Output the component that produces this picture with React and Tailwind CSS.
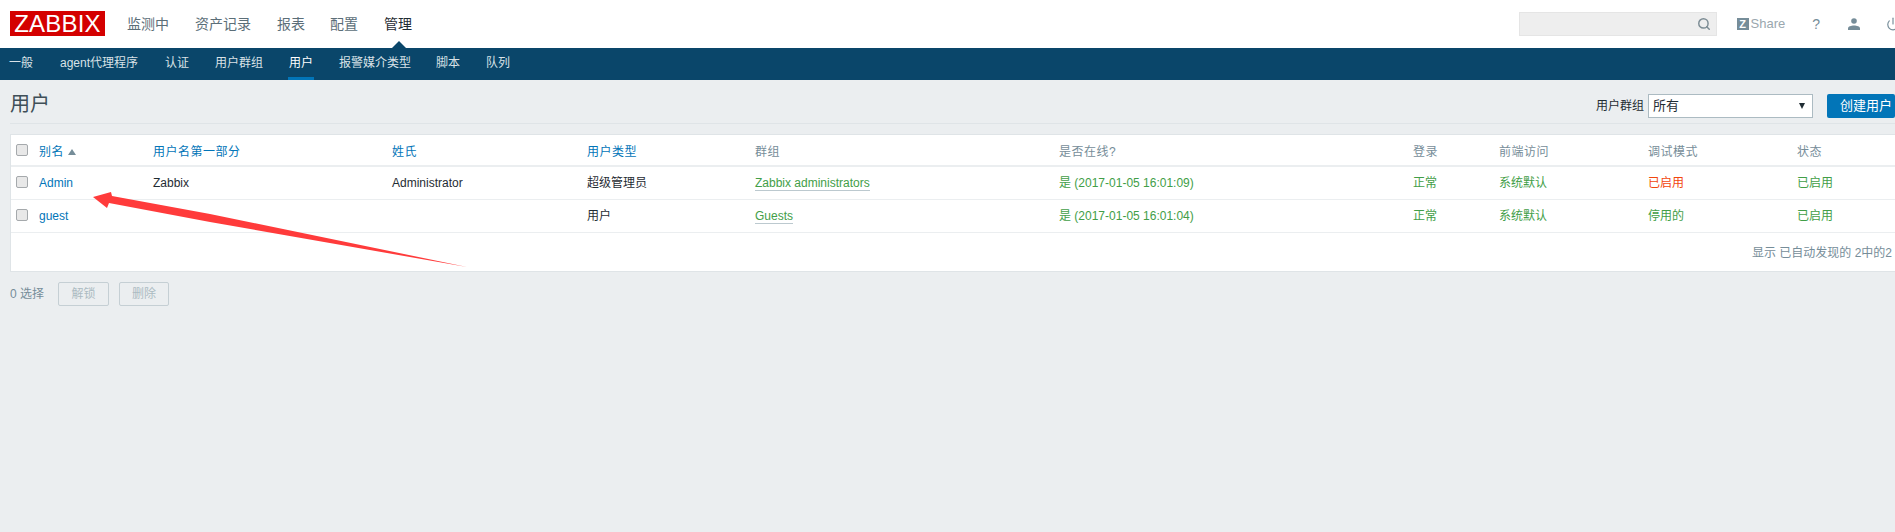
import React from 'react';
import { Search, Power } from 'lucide-react';

const menu = [
  { label: '监测中', cls: 'ml-[22px]' },
  { label: '资产记录', cls: 'ml-[26px]' },
  { label: '报表', cls: 'ml-[26px]' },
  { label: '配置', cls: 'ml-[25px]' },
  { label: '管理', cls: 'ml-[26px] text-[#1f2c33]' },
];

const subMenu = [
  { label: '一般', cls: 'w-[51px]' },
  { label: 'agent代理程序', cls: 'w-[105px]' },
  { label: '认证', cls: 'w-[50px]' },
  { label: '用户群组', cls: 'w-[73px]' },
  { label: '用户', cls: 'w-[51px]', active: true },
  { label: '报警媒介类型', cls: 'w-[97px]' },
  { label: '脚本', cls: 'w-[50px]' },
  { label: '队列', cls: 'w-[50px]' },
];

const gridCols = 'grid grid-cols-[23px_114px_239px_195px_168px_304px_354px_86px_149px_149px_98px]';

const users = [
  { alias: 'Admin', name: 'Zabbix', surname: 'Administrator', type: '超级管理员', group: 'Zabbix administrators', online: '(2017-01-05 16:01:09)', debug: '已启用', debugCls: 'text-[#f2460d]' },
  { alias: 'guest', name: '', surname: '', type: '用户', group: 'Guests', online: '(2017-01-05 16:01:04)', debug: '停用的', debugCls: 'text-[#429e47]' },
];

const Checkbox = ({ className = '' }) => (
  <div className={`w-3 h-3 rounded-[2px] border border-[#a5a9ac] bg-[#e8e8e8] ${className}`} />
);

const App = () => {
  return (
    <div className="relative h-[532px] w-[1895px] overflow-hidden bg-[#ebeef0] text-[12px] text-[#1f2c33] font-['Liberation_Sans','Noto_Sans_CJK_SC',sans-serif]">
      {/* top bar */}
      <header className="h-12 bg-white flex items-center pl-2.5 text-[14px] text-[#5b6e78]">
        <div className="w-[95px] h-[25px] bg-[#d40000] text-white text-[24px] leading-[25px] text-center tracking-[0.2px] mb-[1px]">ZABBIX</div>
        <nav className="flex relative">
          {menu.map((m) => (
            <span key={m.label} className={m.cls}>{m.label}</span>
          ))}
        </nav>
        <div className="ml-auto flex items-center">
          <div className="w-[198px] h-6 bg-[#eeeeee] border border-[#e5e5e5] flex items-center justify-end pr-[5px]">
            <Search className="w-[14px] h-[14px] text-[#7c8c94]" strokeWidth={2.5} />
          </div>
          <div className="ml-5 w-3 h-3 bg-[#768d99] text-white text-[11px] leading-3 font-bold text-center">Z</div>
          <span className="ml-0.5 text-[13px] text-[#9aa7ae]">Share</span>
          <span className="ml-[27px] text-[#768d99] text-[14px]">?</span>
          <svg className="ml-[28px] w-3 h-3 text-[#768d99]" viewBox="0 0 12 12" fill="currentColor">
            <circle cx="6" cy="3" r="2.8" />
            <path d="M0 12V10.2C0 8.4 3.2 7.4 6 7.4S12 8.4 12 10.2V12Z" />
          </svg>
          <Power className="ml-[26px] w-[14px] h-[14px] text-[#768d99] shrink-0 mr-[-5px]" strokeWidth={2} />
        </div>
      </header>

      {/* active menu pointer */}
      <span className="absolute left-[392px] top-[41px] w-0 h-0 border-x-[7px] border-x-transparent border-b-[7px] border-b-[#0a466a]" />

      {/* sub menu */}
      <nav className="h-8 bg-[#0a466a] flex pl-[9px] text-[#f2f2f2]">
        {subMenu.map((s) => (
          <div key={s.label} className={`${s.cls} h-8 leading-[30px]`}>
            <span className={s.active ? 'inline-block h-8 px-[1px] text-white border-b-[3px] border-[#0275b8]' : 'text-[#d9e2e7]'}>{s.label}</span>
          </div>
        ))}
      </nav>

      <main className="pl-2.5">
        {/* title */}
        <div className="h-[44px] border-b border-[#dfe4e7] flex items-start pt-[14px]">
          <h1 className="text-[20px] leading-6 font-normal text-[#3f4f58] -mt-[2px]">用户</h1>
          <div className="ml-auto flex items-center">
            <span>用户群组</span>
            <div className="ml-1 w-[165px] h-6 bg-white border border-[#acbbc2] flex items-center pl-1 pr-[7px] text-[13px]">
              <span>所有</span>
              <span className="ml-auto w-0 h-0 border-x-[3px] border-x-transparent border-t-[6px] border-t-[#1f2c33]" />
            </div>
            <button className="ml-[14px] w-[68px] h-6 rounded-[2px] bg-[#0275b8] text-white text-[13px] text-left pl-[13px]">创建用户</button>
          </div>
        </div>

        {/* table */}
        <section className="mt-[10px] h-[138px] bg-white border-l border-y border-[#dfe4e7]">
          <div className={`${gridCols} h-[32px] border-b-2 border-[#ebeef0] items-center pl-[5px] text-[#768d99] tracking-[0.5px] [&>span]:mt-[3px]`}>
            <Checkbox />
            <span className="text-[#0275b8] flex items-center">别名<span className="ml-1 w-0 h-0 border-x-[4px] border-x-transparent border-b-[6px] border-b-[#768d99]" /></span>
            <span className="text-[#0275b8]">用户名第一部分</span>
            <span className="text-[#0275b8]">姓氏</span>
            <span className="text-[#0275b8]">用户类型</span>
            <span>群组</span>
            <span>是否在线?</span>
            <span>登录</span>
            <span>前端访问</span>
            <span>调试模式</span>
            <span>状态</span>
          </div>
          {users.map((u) => (
            <div key={u.alias} className={`${gridCols} h-[33px] border-b border-[#ebeef0] items-center pl-[5px]`}>
              <Checkbox className="-mt-[2px]" />
              <span className="text-[#0275b8]">{u.alias}</span>
              <span>{u.name}</span>
              <span>{u.surname}</span>
              <span>{u.type}</span>
              <span><span className="text-[#429e47] border-b border-[#bcc9cf]">{u.group}</span></span>
              <span className="text-[#429e47]">是 {u.online}</span>
              <span className="text-[#429e47]">正常</span>
              <span className="text-[#429e47]">系统默认</span>
              <span className={u.debugCls}>{u.debug}</span>
              <span className="text-[#429e47]">已启用</span>
            </div>
          ))}
          <div className="h-[38px] flex items-center justify-end pr-[3px] pt-[2px] text-[#768d99]">显示 已自动发现的 2中的2</div>
        </section>

        {/* actions */}
        <div className="mt-[10px] flex items-center text-[#768d99]">
          <span>0 选择</span>
          <button className="ml-[14px] w-[51px] h-6 rounded-[2px] border border-[#c5cfd4] text-[#acbbc2]">解锁</button>
          <button className="ml-[10px] w-[50px] h-6 rounded-[2px] border border-[#c5cfd4] text-[#acbbc2]">删除</button>
        </div>
      </main>

      {/* red annotation arrow */}
      <svg className="absolute left-0 top-0 pointer-events-none" width="480" height="280" viewBox="0 0 480 280">
        <polygon points="93,197 111,192 112,196 210,214 467,267 210,222 109,203 107,208" fill="#ff3b3b" />
      </svg>
    </div>
  );
};

export default App;
